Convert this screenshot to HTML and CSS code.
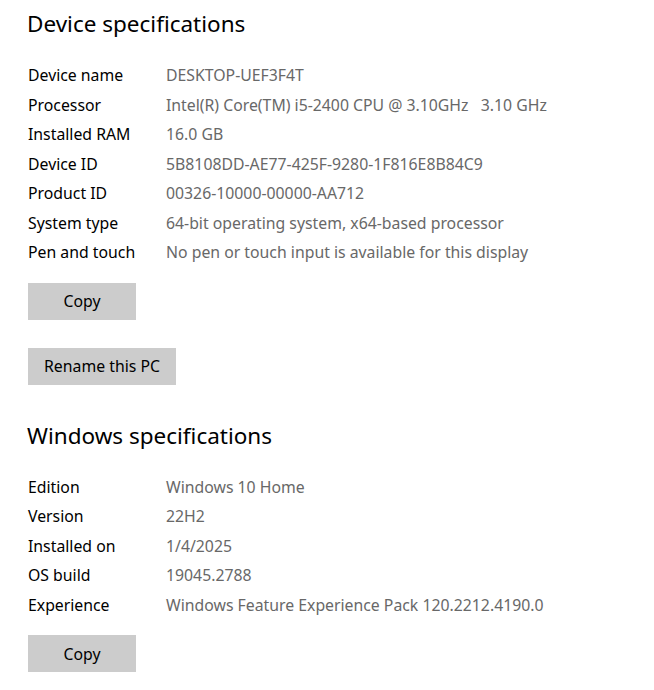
FILE: index.html
```html
<!DOCTYPE html>
<html lang="en">
<head>
<meta charset="utf-8">
<title>About</title>
<link rel="stylesheet" href="styles.css">
</head>
<body>
<main class="page">
  <section class="spec spec-device">
    <h2 class="spec-title">Device specifications</h2>
    <dl class="spec-list">
      <dt>Device name</dt><dd>DESKTOP-UEF3F4T</dd>
      <dt>Processor</dt><dd>Intel(R) Core(TM) i5-2400 CPU @ 3.10GHz&nbsp;&nbsp;&nbsp;3.10 GHz</dd>
      <dt>Installed RAM</dt><dd>16.0 GB</dd>
      <dt>Device ID</dt><dd>5B8108DD-AE77-425F-9280-1F816E8B84C9</dd>
      <dt>Product ID</dt><dd>00326-10000-00000-AA712</dd>
      <dt>System type</dt><dd>64-bit operating system, x64-based processor</dd>
      <dt>Pen and touch</dt><dd>No pen or touch input is available for this display</dd>
    </dl>
    <button class="btn btn-copy" type="button">Copy</button>
    <button class="btn btn-rename" type="button">Rename this PC</button>
  </section>
  <section class="spec spec-windows">
    <h2 class="spec-title">Windows specifications</h2>
    <dl class="spec-list">
      <dt>Edition</dt><dd>Windows 10 Home</dd>
      <dt>Version</dt><dd>22H2</dd>
      <dt>Installed on</dt><dd>1/4/2025</dd>
      <dt>OS build</dt><dd>19045.2788</dd>
      <dt>Experience</dt><dd>Windows Feature Experience Pack 120.2212.4190.0</dd>
    </dl>
    <button class="btn btn-copy" type="button">Copy</button>
  </section>
</main>
</body>
</html>
```
FILE: styles.css
```css
html, body {
  margin: 0;
  padding: 0;
  background: #ffffff;
}

body {
  font-family: "Noto Sans", "Open Sans", sans-serif;
  color: #000000;
}

.page {
  padding: 8px 0 0 28px;
}

.spec {
  display: flex;
  flex-direction: column;
  align-items: flex-start;
}

.spec-title {
  margin: 0 0 0 -1px;
  font-size: 22.5px;
  font-weight: 400;
  line-height: 32px;
  color: #000000;
}

.spec-list {
  display: grid;
  grid-template-columns: 138px auto;
  margin: 21px 0 0 0;
  font-size: 15.8px;
  line-height: 29.5px;
}

.spec-list dt {
  color: #000000;
}

.spec-list dd {
  margin: 0;
  color: #686868;
  white-space: nowrap;
}

.btn {
  font-family: inherit;
  font-size: 15.8px;
  color: #000000;
  background: #cccccc;
  border: none;
  border-radius: 0;
  height: 37px;
  padding: 0;
  margin-top: 15px;
}

.btn-copy {
  width: 108px;
}

.btn-rename {
  width: 148px;
  margin-top: 28px;
}

.spec-windows {
  margin-top: 35px;
}
```
